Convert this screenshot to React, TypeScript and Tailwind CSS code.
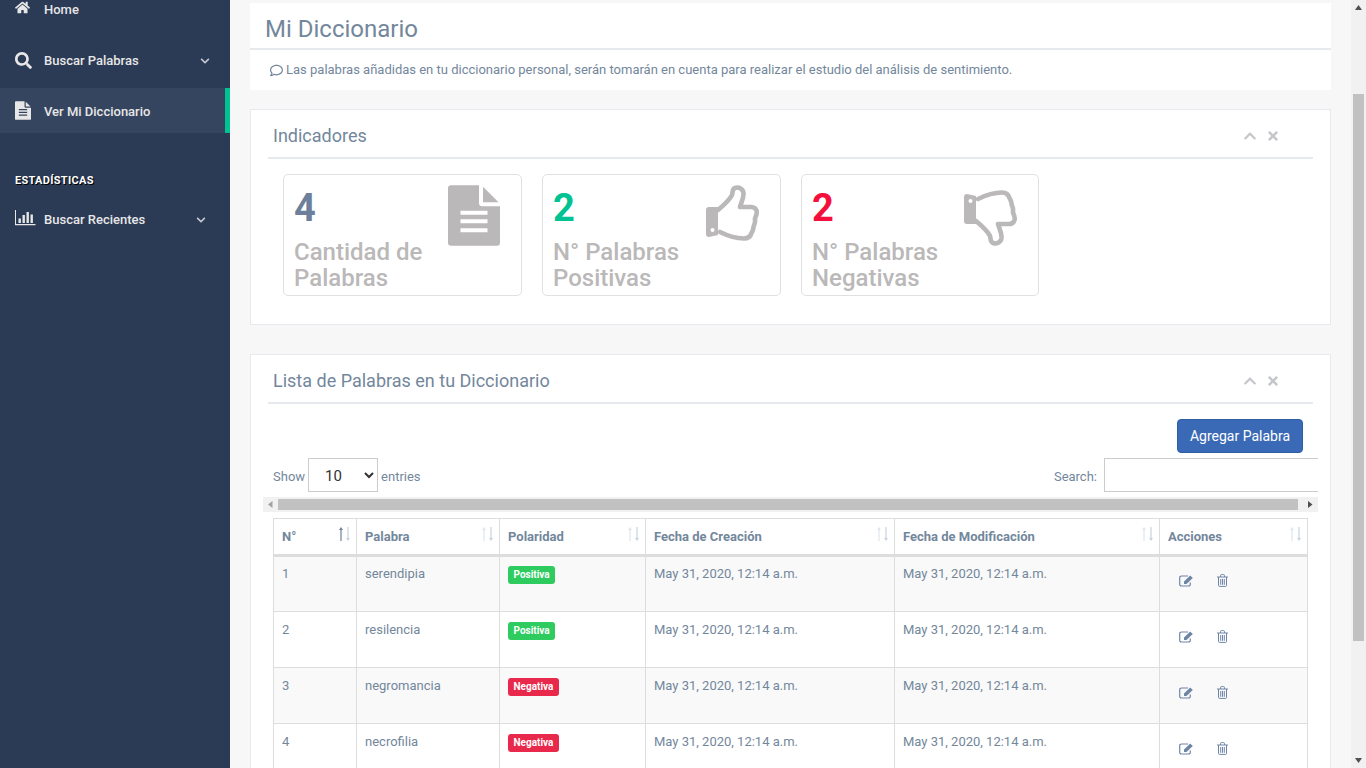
import React from "react";
import { FaHome, FaSearch, FaChevronDown, FaChevronUp, FaTimes, FaRegComment } from "react-icons/fa";

const rows = [
  ["1", "serendipia", "Positiva"],
  ["2", "resilencia", "Positiva"],
  ["3", "negromancia", "Negativa"],
  ["4", "necrofilia", "Negativa"],
];

function FileIcon({ w, h, bg }: { w: number; h: number; bg: string }) {
  return (
    <svg width={w} height={h} viewBox="0 0 52 60.5" fill="currentColor">
      <path d="M3 0 H31 V18 a3 3 0 0 0 3 3 H52 V57.5 a3 3 0 0 1 -3 3 H3 a3 3 0 0 1 -3 -3 V3 a3 3 0 0 1 3 -3Z" />
      <path d="M35 1.5 L50.5 17 H35Z" />
      <path d="M12.5 25.5 H39.5 V29.5 H12.5Z M12.5 34 H39.5 V38 H12.5Z M12.5 43 H39.5 V47 H12.5Z" fill={bg} />
    </svg>
  );
}

function ChartIcon() {
  return (
    <svg width="21" height="16" viewBox="0 0 21 16" fill="currentColor">
      <path d="M0 0 H1 V14 H20.5 V15.2 H0Z" />
      <rect x="3.5" y="8.5" width="2.4" height="4.5" />
      <rect x="7.5" y="5" width="2.4" height="8" />
      <rect x="11.5" y="2" width="2.4" height="11" />
      <rect x="15.5" y="4.5" width="2.4" height="8.5" />
    </svg>
  );
}

function Thumb({ down }: { down?: boolean }) {
  return (
    <svg width="54" height="56" viewBox="0 0 54 56">
      <g transform={down ? "translate(0 56) scale(1 -1)" : undefined}>
        <path d="M12 25 C18 20 24 14 26 10 C27 7 26 4 29 3 C33 1.5 37 4 37.5 8 C38 13 35 18 34 22 H45 C49 22 51.5 25 50.5 29 C50 32 48.5 33 49 35 C49.5 38 48 40 47.5 42 C47.5 45 46.5 46 45.5 48 C44.5 51.5 42.5 53.5 38 53.5 C31 53.5 22 51 14 47" fill="none" stroke="currentColor" strokeWidth="4.6" strokeLinecap="round" strokeLinejoin="round" />
        <path d="M3 22 H12 V50 L3 52 a3 3 0 0 1 -3 -3 V25 a3 3 0 0 1 3 -3Z" fill="currentColor" />
        <circle cx="6.5" cy="45" r="2" fill="#ffffff" />
      </g>
    </svg>
  );
}

function EditIcon() {
  return (
    <svg width="15" height="12" viewBox="0 0 15 12" fill="none" stroke="currentColor" strokeWidth="1.2">
      <path d="M9 1 H2.5 a1.8 1.8 0 0 0 -1.8 1.8 V9.2 a1.8 1.8 0 0 0 1.8 1.8 H9.5 a1.8 1.8 0 0 0 1.8 -1.8 V7.5" />
      <path d="M5 9 V6.6 L11.2 0.6 L13.8 3 L7.5 9Z" fill="currentColor" stroke="none" />
    </svg>
  );
}

function TrashIcon() {
  return (
    <svg width="11" height="13" viewBox="0 0 11 13" fill="none" stroke="currentColor" strokeWidth="1">
      <path d="M0 3 H11" />
      <path d="M3.5 3 V1.6 a1 1 0 0 1 1 -1 H6.5 a1 1 0 0 1 1 1 V3" />
      <path d="M1.5 3 V11.4 a1 1 0 0 0 1 1 H8.5 a1 1 0 0 0 1 -1 V3" />
      <path d="M3.7 5 V10.8 M5.5 5 V10.8 M7.3 5 V10.8" />
    </svg>
  );
}

function Sort({ active }: { active?: boolean }) {
  return (
    <span className="absolute right-[5px] top-[7px] flex gap-[1px]">
      <svg width="6" height="16" viewBox="0 0 6 16"><path d="M3 1 L5 4 H3.6 V15 H2.4 V4 H1 Z" fill={active ? "#6f8299" : "#dfe6ee"} /></svg>
      <svg width="6" height="16" viewBox="0 0 6 16"><path d="M3 15 L5 12 H3.6 V1 H2.4 V12 H1 Z" fill="#c9d3df" /></svg>
    </span>
  );
}

function PanelHead({ title }: { title: string }) {
  return (
    <div className="mx-[17px] flex h-[49px] items-center justify-between border-b-2 border-[#e6e9ed] pb-[4px] pl-[5px] pr-[33px] pt-[8px]">
      <span className="text-[18px] text-[#73879c]">{title}</span>
      <span className="flex items-center gap-[9px] text-[#c5c7cb]">
        <FaChevronUp size={14} />
        <FaTimes size={14} />
      </span>
    </div>
  );
}

function Card({ n, color, l1, l2, icon, wide = true, iconPos }: { n: string; color: string; l1: string; l2: string; icon: React.ReactNode; wide?: boolean; iconPos: string }) {
  return (
    <div className={"relative h-[122px] rounded-[5px] border border-[#e1e1e1] bg-white pl-[10px] pt-[11px] " + (wide ? "w-[239px]" : "w-[238px]")}>
      <div className="text-[38px] font-bold leading-[44px]" style={{ color }}>{n}</div>
      <div className="mt-[9px] text-[24px] font-medium leading-[26px] text-[#bab8b8]">{l1}<br />{l2}</div>
      <div className={"absolute text-[#bab8b8] " + iconPos}>{icon}</div>
    </div>
  );
}

const sideItem = "flex h-[45px] items-center text-[13px] font-medium text-[#e7e7e7]";
const cell = "border border-[#ddd] px-[8px] align-top leading-[19px]";

export default function App() {
  return (
    <div className="flex h-screen overflow-hidden bg-[#f7f7f7] text-[13px] text-[#73879c]" style={{ fontFamily: "Roboto, 'Liberation Sans', sans-serif" }}>
      <aside className="w-[230px] shrink-0 bg-[#2b3a55]">
        <div className="-mt-[14px] flex flex-col gap-[6px]">
          <div className={sideItem + " pl-[15px] pt-[2px]"}>
            <span className="mb-[5px] flex w-[29px]"><FaHome size={15} /></span>Home
          </div>
          <div className={sideItem + " pl-[15px] pr-[20px] pt-[2px]"}>
            <span className="flex w-[29px]"><FaSearch size={17} /></span>Buscar Palabras
            <FaChevronDown size={10} className="ml-auto text-[#c3c8d0]" />
          </div>
          <div className={sideItem + " border-r-[5px] border-[#00c292] bg-[#36455f] pl-[15px] pt-[2px]"}>
            <span className="mb-[3px] flex w-[29px]"><FileIcon w={16} h={19} bg="#36455f" /></span>Ver Mi Diccionario
          </div>
        </div>
        <div className="mt-[39px] flex h-[18px] items-center pl-[15px] text-[11px] font-bold uppercase tracking-[0.3px] text-white" style={{ textShadow: "1px 1px #000" }}>Estadísticas</div>
        <div className={sideItem + " mt-[7px] pl-[15px] pr-[24px]"}>
          <span className="mb-[3px] flex w-[29px]"><ChartIcon /></span>Buscar Recientes
          <FaChevronDown size={10} className="ml-auto text-[#c3c8d0]" />
        </div>
      </aside>

      <main className="min-w-0 flex-1 px-[20px] pt-[3px]">
        <div className="bg-white">
          <div className="flex h-[47px] items-center border-b-2 border-[#e6e9ed] pl-[15px] pt-[6px] text-[24px] text-[#73879c]">Mi Diccionario</div>
          <div className="flex h-[40px] items-center gap-[3px] pl-[20px] text-[13px]">
            <FaRegComment size={13} />
            <span>Las palabras añadidas en tu diccionario personal, serán tomarán en cuenta para realizar el estudio del análisis de sentimiento.</span>
          </div>
        </div>

        <section className="mt-[19px] h-[216px] border border-[#e6e9ed] bg-white">
          <PanelHead title="Indicadores" />
          <div className="flex gap-[20px] pl-[32px] pt-[15px]">
            <Card n="4" color="#6e7f9b" l1="Cantidad de" l2="Palabras" iconPos="right-[21px] top-[10px]" icon={<FileIcon w={52} h={61} bg="#ffffff" />} />
            <Card n="2" color="#00c292" l1="N° Palabras" l2="Positivas" iconPos="right-[20px] top-[10px]" icon={<Thumb />} />
            <Card n="2" color="#f5103c" l1="N° Palabras" l2="Negativas" wide={false} iconPos="right-[20px] top-[15px]" icon={<Thumb down />} />
          </div>
        </section>

        <section className="mt-[29px] h-[600px] border border-[#e6e9ed] bg-white">
          <PanelHead title="Lista de Palabras en tu Diccionario" />
          <div className="flex justify-end pr-[27px] pt-[15px]">
            <button className="h-[34px] w-[126px] rounded-[4px] border border-[#2e5ea6] bg-[#3a6ab5] text-[14px] text-white">Agregar Palabra</button>
          </div>
          <div className="mx-[12px] overflow-hidden">
            <div className="mt-[5px] flex h-[34px] items-center justify-between pl-[10px]">
              <div className="flex items-center gap-[3px]">
                <span className="pt-[4px]">Show</span>
                <select className="h-[34px] w-[70px] border border-[#ccc] bg-white pl-[12px] pt-[1px] text-[15px] text-[#333]" defaultValue="10"><option>10</option></select>
                <span className="pt-[4px]">entries</span>
              </div>
              <div className="flex items-center gap-[7px]">
                <span className="pt-[4px]">Search:</span>
                <div className="-mr-[1px] h-[34px] w-[215px] border-y border-l border-[#ccc]" />
              </div>
            </div>
            <div className="mt-[5px] flex h-[15px] items-center bg-[#f1f1f1]">
              <span className="flex w-[15px] justify-center"><svg width="5" height="7" viewBox="0 0 5 7"><path d="M4.5 0 V7 L0 3.5Z" fill="#a3a3a3" /></svg></span>
              <div className="h-[11px] w-[1020px] bg-[#c1c1c1]" />
              <span className="ml-auto flex w-[15px] justify-center"><svg width="5" height="7" viewBox="0 0 5 7"><path d="M0 0 V7 L4.5 3.5Z" fill="#505050" /></svg></span>
            </div>
            <table className="ml-[10px] mt-[6px] w-[1034px] table-fixed border-collapse">
              <colgroup>
                <col className="w-[83px]" /><col className="w-[143px]" /><col className="w-[146px]" /><col className="w-[249px]" /><col className="w-[265px]" /><col className="w-[148px]" />
              </colgroup>
              <thead>
                <tr className="h-[37px]">
                  {["N°", "Palabra", "Polaridad", "Fecha de Creación", "Fecha de Modificación", "Acciones"].map((h, i) => (
                    <th key={h} className="relative border border-b-[3px] border-[#ddd] px-[8px] text-left font-bold">{h}<Sort active={i === 0} /></th>
                  ))}
                </tr>
              </thead>
              <tbody>
                {rows.map((r, i) => {
                  const textPad = i === 0 ? "pt-[7px]" : "pt-[8px]";
                  return (
                    <tr key={r[0]} className={"h-[56px] " + (i % 2 === 0 ? "bg-[#f9f9f9]" : "bg-white")}>
                      <td className={cell + " " + textPad}>{r[0]}</td>
                      <td className={cell + " " + textPad}>{r[1]}</td>
                      <td className={"border border-[#ddd] px-[8px] align-top " + (i === 0 ? "pt-[9px]" : "pt-[10px]")}>
                        <span className={"block h-[18px] w-fit rounded-[3px] px-[5.5px] text-[10px] font-bold leading-[18px] text-white " + (r[2] === "Positiva" ? "bg-[#2ecc5f]" : "bg-[#e8294b]")}>{r[2]}</span>
                      </td>
                      <td className={cell + " " + textPad}>May 31, 2020, 12:14 a.m.</td>
                      <td className={cell + " " + textPad}>May 31, 2020, 12:14 a.m.</td>
                      <td className={"border border-[#ddd] pl-[19px] align-top " + (i === 0 ? "pt-[17px]" : "pt-[18px]")}>
                        <span className="flex items-center gap-[23px] text-[#6f85a8]"><EditIcon /><TrashIcon /></span>
                      </td>
                    </tr>
                  );
                })}
              </tbody>
            </table>
          </div>
        </section>
      </main>

      <div className="flex w-[15px] shrink-0 flex-col bg-[#f1f1f1]">
        <span className="flex h-[15px] items-center justify-center"><svg width="7" height="5" viewBox="0 0 7 5"><path d="M0 5 H7 L3.5 0Z" fill="#505050" /></svg></span>
        <div className="ml-[2px] mt-[79px] h-[547px] w-[11px] bg-[#c1c1c1]" />
        <span className="mt-auto flex h-[15px] items-center justify-center"><svg width="7" height="5" viewBox="0 0 7 5"><path d="M0 0 H7 L3.5 5Z" fill="#505050" /></svg></span>
      </div>
    </div>
  );
}
